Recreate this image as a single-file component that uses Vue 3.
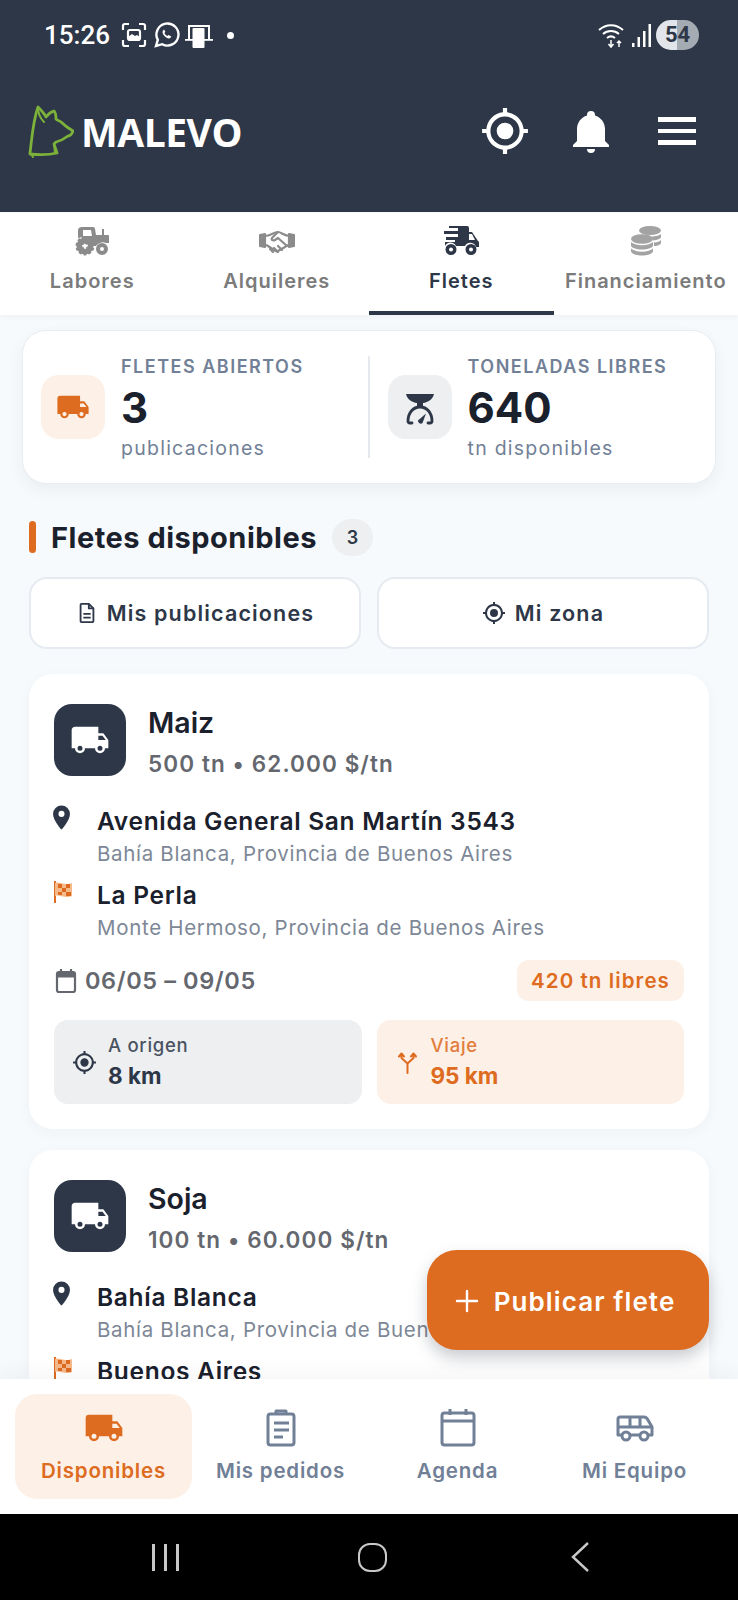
<script setup>
const tabs = [
  { key: 'labores', label: 'Labores' },
  { key: 'alquileres', label: 'Alquileres' },
  { key: 'fletes', label: 'Fletes', active: true },
  { key: 'fin', label: 'Financiamiento' }
]
const truck = 'M18,18.5A1.5,1.5 0 0,1 16.5,17A1.5,1.5 0 0,1 18,15.5A1.5,1.5 0 0,1 19.5,17A1.5,1.5 0 0,1 18,18.5M19.5,9.5L21.46,12H17V9.5M6,18.5A1.5,1.5 0 0,1 4.5,17A1.5,1.5 0 0,1 6,15.5A1.5,1.5 0 0,1 7.5,17A1.5,1.5 0 0,1 6,18.5M20,8H17V4H3C1.89,4 1,4.89 1,6V17H3A3,3 0 0,0 6,20A3,3 0 0,0 9,17H15A3,3 0 0,0 18,20A3,3 0 0,0 21,17H23V12L20,8Z'
const gps = 'M12,8A4,4 0 0,1 16,12A4,4 0 0,1 12,16A4,4 0 0,1 8,12A4,4 0 0,1 12,8M3.05,13H1V11H3.05C3.5,6.83 6.83,3.5 11,3.05V1H13V3.05C17.17,3.5 20.5,6.83 20.95,11H23V13H20.95C20.5,17.17 17.17,20.5 13,20.95V23H11V20.95C6.83,20.5 3.5,17.17 3.05,13M12,5A7,7 0 0,0 5,12A7,7 0 0,0 12,19A7,7 0 0,0 19,12A7,7 0 0,0 12,5Z'
const bell = 'M21,19V20H3V19L5,17V11C5,7.9 7.03,5.17 10,4.29C10,4.19 10,4.1 10,4A2,2 0 0,1 12,2A2,2 0 0,1 14,4C14,4.1 14,4.19 14,4.29C16.97,5.17 19,7.9 19,11V17L21,19M14,21A2,2 0 0,1 12,23A2,2 0 0,1 10,21'
const marker = 'M12,11.5A2.5,2.5 0 0,1 9.5,9A2.5,2.5 0 0,1 12,6.5A2.5,2.5 0 0,1 14.5,9A2.5,2.5 0 0,1 12,11.5M12,2A7,7 0 0,0 5,9C5,14.25 12,22 12,22C12,22 19,14.25 19,9A7,7 0 0,0 12,2Z'
const cards = [
  {
    title: 'Maiz', meta: '500 tn • 62.000 $/tn',
    from: 'Avenida General San Martín 3543', fromSub: 'Bahía Blanca, Provincia de Buenos Aires',
    to: 'La Perla', toSub: 'Monte Hermoso, Provincia de Buenos Aires',
    date: '06/05 – 09/05', free: '420 tn libres', origin: '8 km', trip: '95 km'
  },
  {
    title: 'Soja', meta: '100 tn • 60.000 $/tn',
    from: 'Bahía Blanca', fromSub: 'Bahía Blanca, Provincia de Buenos Aires',
    to: 'Buenos Aires'
  }
]
</script>

<template>
  <div class="page">
    <header class="top">
      <div class="status">
        <span class="time">15:26</span>
        <svg class="st-ico" width="28" height="28" viewBox="0 0 28 28" fill="none" stroke="#fff" stroke-width="2.2">
          <path d="M3 9V5a2 2 0 0 1 2-2h4M19 3h4a2 2 0 0 1 2 2v4M25 19v4a2 2 0 0 1-2 2h-4M9 25H5a2 2 0 0 1-2-2v-4" />
          <rect x="8" y="9" width="12" height="10" rx="2" />
          <path d="M8 19v-3l4-3 3 2 2-1 3 2v3z" fill="#fff" stroke="none" />
        </svg>
        <svg class="st-ico" width="28" height="28" viewBox="0 0 28 28" fill="none" stroke="#fff" stroke-width="2.4">
          <path d="M3 25l1.8-6.2A11 11 0 1 1 9.2 23.2z" />
          <path d="M10 9.5c-1 1.5-.5 3.5 1.5 5.6s4.2 3 5.8 2l1-1.6-2.8-1.6-1.2 1c-1-.4-2.4-1.8-2.9-3l1-1.1L11 8.500z" fill="#fff" stroke="none" />
        </svg>
        <svg class="st-ico" width="28" height="30" viewBox="0 0 28 30" fill="#fff">
          <path d="M3 19V5h22v14h-2V7H5v12z" />
          <rect x="0" y="19" width="28" height="1.800" />
          <rect x="7.500" y="8" width="12" height="20" rx="1" />
        </svg>
        <span class="st-dot"></span>
        <span class="st-gap"></span>
        <svg width="30" height="30" viewBox="0 0 30 30" fill="none" stroke="#fff" stroke-width="2">
          <path d="M1 10c7-6.500 17-6.500 24 0M5 14c4.500-4 11.500-4 16 0M9 18c2.500-2 5.500-2 8 0" />
          <path d="M13 20v7M10.500 24l2.500 3 2.500-3M21 27v-6M19 23l2-2 2 2" stroke-width="1.500" />
        </svg>
        <svg class="signal" width="20" height="26" viewBox="0 0 20 26" fill="#fff">
          <rect x="0" y="21" width="2.500" height="4" />
          <rect x="5.500" y="15" width="2.500" height="10" />
          <rect x="11" y="9" width="2.500" height="16" />
          <rect x="16.500" y="2" width="2.500" height="23" />
        </svg>
        <span class="battery">54</span>
      </div>
      <div class="brand-row">
        <div class="brand">
          <svg class="dog" width="46" height="54" viewBox="0 0 46 54" fill="none" stroke="#7cb13a" stroke-width="2.800" stroke-linecap="round" stroke-linejoin="round">
            <path d="M2 49C4 33 5 17 10 3c3 3 6 6 8 10 2-3 5-5 8-6 2 2 2 5 2 8 2 2 4 2 5 3 3 3 7 6 12 9-1 3-3 5-5 5-4 3-8 5-12 6l-2 2 3 9c-8 2-18 2-27 1" />
            <path d="M10 3c0 6 2 11 6 15M3 50l2 3M26 40l1 9" stroke-width="2" />
          </svg>
          <span class="logo-text">MALEVO</span>
        </div>
        <div class="top-actions">
          <svg width="50" height="50" viewBox="0 0 24 24" fill="#fff"><path :d="gps" /></svg>
          <svg width="48" height="48" viewBox="0 0 24 24" fill="#fff"><path :d="bell" /></svg>
          <div class="burger"><i></i><i></i><i></i></div>
        </div>
      </div>
    </header>

    <nav class="tabs">
      <div v-for="t in tabs" :key="t.key" class="tab" :class="{ on: t.active }">
        <svg v-if="t.key === 'labores'" width="36" height="30" viewBox="0 0 36 30" fill="#8b8b8b">
          <path d="M8 1h11a2 2 0 0 1 2 2l1 6h6V3h2v6h4a1 1 0 0 1 1 1v7h-3a8 8 0 0 0-10 3h-3a11 11 0 0 0-15-8V4c0-1.700 2-3 4-3zm1 3v6h9l-1-6z" fill-rule="evenodd" />
          <path d="M11 11.500a8.500 8.500 0 1 0 0 17 8.500 8.500 0 0 0 0-17zm0 5.500a3 3 0 1 1 0 6 3 3 0 0 1 0-6z" fill-rule="evenodd" stroke="#8b8b8b" stroke-width="2" stroke-dasharray="3 2" />
          <path d="M28 17a6 6 0 1 0 0 12 6 6 0 0 0 0-12zm0 4a2 2 0 1 1 0 4 2 2 0 0 1 0-4z" fill-rule="evenodd" />
        </svg>
        <svg v-else-if="t.key === 'alquileres'" width="36" height="30" viewBox="0 0 36 30" fill="none" stroke="#8b8b8b" stroke-width="2.200" stroke-linejoin="round" stroke-linecap="round">
          <path d="M1 9l5-1 0 13-5-1zM35 9l-5-1 0 13 5-1z" fill="#8b8b8b" />
          <path d="M6 10c3 0 5-1 7-2 2-1 4-2 6-2 3 0 5 3 11 4M30 19c-2 0-3 1-4 2l-7 4c-2 1-3 0-4-1l-6-4c-1-1-2-1-3-1" />
          <path d="M19 6l-6 6c-1 2 1 3 3 2l3-2 9 8M14 26l-3-3M19 26l-4-4M23 24l-4-4" />
        </svg>
        <svg v-else-if="t.key === 'fletes'" width="38" height="30" viewBox="0 0 38 30" fill="#2d3748">
          <path d="M7 0h18a2 2 0 0 1 2 2v4h3l6 9 1 1v5h-3a6 6 0 0 0-11-1H14a6 6 0 0 0-11 0V16h10v-2H4v-3h12V8H2V5h14V2H7z" />
          <path d="M27 8v6h6l-3-6z" fill="#fff" />
          <path d="M9 18a5.500 5.500 0 1 0 0 11 5.500 5.500 0 0 0 0-11zm0 3.500a2 2 0 1 1 0 4 2 2 0 0 1 0-4zM29 18a5.500 5.500 0 1 0 0 11 5.500 5.500 0 0 0 0-11zm0 3.500a2 2 0 1 1 0 4 2 2 0 0 1 0-4z" fill-rule="evenodd" />
        </svg>
        <svg v-else width="32" height="30" viewBox="0 0 32 30" fill="#a3a3a3">
          <ellipse cx="20" cy="4.500" rx="11" ry="4.500" />
          <path d="M22 10.500c4 0 7.500-1 9-2.500v3c0 1.500-3 3-8 3.400zM24 16.500c3 0 6-1 7-2.500v3c0 1.500-3 3-7 3z" />
          <ellipse cx="12" cy="13" rx="11" ry="4.800" />
          <path d="M1 16c2 2 6 3.200 11 3.200S21 18 23 16v3.500c0 2-5 4-11 4s-11-2-11-4zM1 22.500c2 2 6 3.200 11 3.200s9-1.200 11-3.200V25c0 2.500-5 4.500-11 4.500S1 27.500 1 25z" />
        </svg>
        <span>{{ t.label }}</span>
      </div>
    </nav>

    <main class="main">
      <section class="stats">
        <div class="stat first">
          <div class="stat-box orange">
            <svg width="34" height="34" viewBox="0 0 24 24" fill="#dd6b20"><path d="M1 6a2 2 0 0 1 2-2h14v4h3l3 4v5h-2a3 3 0 0 1-6 0H9a3 3 0 0 1-6 0H1zm16 3.500V12h4.460L19.500 9.500zM6 15.500a1.500 1.500 0 1 0 0 3 1.500 1.500 0 0 0 0-3zm12 0a1.500 1.500 0 1 0 0 3 1.500 1.500 0 0 0 0-3z" fill-rule="evenodd" /></svg>
          </div>
          <div class="stat-text">
            <div class="stat-label">FLETES ABIERTOS</div>
            <div class="stat-num">3</div>
            <div class="stat-sub">publicaciones</div>
          </div>
        </div>
        <div class="stat-div"></div>
        <div class="stat second">
          <div class="stat-box grey">
            <svg width="50" height="50" viewBox="0 0 50 50" fill="none" stroke="#2d3748" stroke-width="2.800" stroke-linecap="round" stroke-linejoin="round">
              <path d="M11 12h28c-1 5-6 8.500-11 9v4h-6v-4c-5-.5-10-4-11-9z" fill="#2d3748" stroke="none" />
              <path d="M17 41h-2a2 2 0 0 1-2-2c0-8 5-14 12-14s12 6 12 14a2 2 0 0 1-2 2h-2" />
              <path d="M23 38.500a2.800 2.800 0 0 0 4.500 2.500l3.500-9.500z" fill="#2d3748" stroke="none" />
            </svg>
          </div>
          <div class="stat-text">
            <div class="stat-label">TONELADAS LIBRES</div>
            <div class="stat-num">640</div>
            <div class="stat-sub">tn disponibles</div>
          </div>
        </div>
      </section>

      <div class="section-head">
        <span class="accent"></span>
        <h2>Fletes disponibles</h2>
        <span class="count">3</span>
      </div>

      <div class="btn-row">
        <button class="btn">
          <svg width="22" height="22" viewBox="0 0 24 24" fill="none" stroke="#2d3748" stroke-width="2" stroke-linejoin="round">
            <path d="M6 2h8l5 5v14a1 1 0 0 1-1 1H6a1 1 0 0 1-1-1V3a1 1 0 0 1 1-1z" />
            <path d="M14 2v5h5M8 13h8M8 17h8" />
          </svg>
          Mis publicaciones
        </button>
        <button class="btn">
          <svg width="24" height="24" viewBox="0 0 24 24" fill="#2d3748"><path :d="gps" /></svg>
          Mi zona
        </button>
      </div>

      <article v-for="c in cards" :key="c.title" class="card">
        <div class="card-head">
          <div class="card-ico">
            <svg width="40" height="40" viewBox="0 0 24 24" fill="#fff"><path :d="truck" /></svg>
          </div>
          <div>
            <div class="card-title">{{ c.title }}</div>
            <div class="card-meta">{{ c.meta }}</div>
          </div>
        </div>
        <div class="route">
          <svg class="route-ico pin" width="29" height="29" viewBox="0 0 24 24" fill="#2d3748"><path :d="marker" /></svg>
          <div>
            <div class="place">{{ c.from }}</div>
            <div class="place-sub">{{ c.fromSub }}</div>
          </div>
        </div>
        <div class="route">
          <svg class="route-ico flag" width="24" height="24" viewBox="0 0 24 24">
            <path d="M3 1v22" stroke="#dd6b20" stroke-width="2" fill="none" />
            <path d="M3 3c5-2 8 3 17 0v13c-8 3-12-2-17 0z" fill="#f5b98a" />
            <path d="M6 4h4v4H6zM14 4h4v4h-4zM10 8h4v4h-4zM6 12h4v3H6zM14 12h5v4h-5z" fill="#dd6b20" />
          </svg>
          <div>
            <div class="place">{{ c.to }}</div>
            <div v-if="c.toSub" class="place-sub">{{ c.toSub }}</div>
          </div>
        </div>
        <template v-if="c.date">
          <div class="date-row">
            <div class="date">
              <svg width="24" height="26" viewBox="0 0 24 26" fill="none" stroke="#64676e" stroke-width="2.200">
                <rect x="3" y="4" width="18" height="20" rx="2" />
                <path d="M3 7h18" stroke-width="5" />
                <path d="M7 1v4M17 1v4" />
              </svg>
              {{ c.date }}
            </div>
            <span class="free">{{ c.free }}</span>
          </div>
          <div class="tiles">
            <div class="tile grey">
              <svg width="25" height="25" viewBox="0 0 24 24" fill="#2d3748"><path :d="gps" /></svg>
              <div>
                <div class="tile-label">A origen</div>
                <div class="tile-val">{{ c.origin }}</div>
              </div>
            </div>
            <div class="tile peach">
              <svg width="25" height="25" viewBox="0 0 25 25" fill="none" stroke="#dd6b20" stroke-width="2" stroke-linecap="round" stroke-linejoin="round">
                <path d="M12.500 23V13.500L6.500 8V4M12.500 13.500L18.500 8V4M4 6.500l2.500-3 2.500 3M16 6.500l2.500-3 2.500 3" />
              </svg>
              <div>
                <div class="tile-label">Viaje</div>
                <div class="tile-val">{{ c.trip }}</div>
              </div>
            </div>
          </div>
        </template>
      </article>
    </main>

    <button class="fab">
      <svg width="24" height="24" viewBox="0 0 24 24" stroke="#fff" stroke-width="2.400" stroke-linecap="round"><path d="M12 2v20M2 12h20" /></svg>
      Publicar flete
    </button>

    <nav class="bottom">
      <div class="nav-item on">
        <svg width="40" height="40" viewBox="0 0 24 24" fill="#dd6b20"><path d="M1 6a2 2 0 0 1 2-2h14v4h3l3 4v5h-2a3 3 0 0 1-6 0H9a3 3 0 0 1-6 0H1zm16 3.500V12h4.460L19.500 9.500zM6 15.500a1.500 1.500 0 1 0 0 3 1.500 1.500 0 0 0 0-3zm12 0a1.500 1.500 0 1 0 0 3 1.500 1.500 0 0 0 0-3z" fill-rule="evenodd" /></svg>
        <span>Disponibles</span>
      </div>
      <div class="nav-item">
        <svg width="40" height="40" viewBox="0 0 40 40" fill="none" stroke="#718096" stroke-width="3" stroke-linejoin="round">
          <rect x="7" y="6" width="26" height="31" rx="2.500" />
          <path d="M15 6V3h10v3" />
          <path d="M13 15h15M13 22h15M13 29h9" />
        </svg>
        <span>Mis pedidos</span>
      </div>
      <div class="nav-item">
        <svg width="40" height="40" viewBox="0 0 40 40" fill="none" stroke="#718096" stroke-width="3" stroke-linejoin="round">
          <rect x="4" y="5" width="32" height="32" rx="2.500" />
          <path d="M4 13h32M12 1v6M28 1v6" />
        </svg>
        <span>Agenda</span>
      </div>
      <div class="nav-item">
        <svg width="40" height="40" viewBox="0 0 40 40" fill="none" stroke="#718096" stroke-width="3" stroke-linejoin="round">
          <path d="M3 27V11a2 2 0 0 1 2-2h24c2 0 3 1 4 3l4 7v8z" />
          <path d="M3 19h34M15 9v10M25 9v10" />
          <circle cx="11" cy="28" r="4" fill="#fff" />
          <circle cx="29" cy="28" r="4" fill="#fff" />
        </svg>
        <span>Mi Equipo</span>
      </div>
    </nav>

    <footer class="sysbar">
      <div class="recents"><i></i><i></i><i></i></div>
      <div class="home"></div>
      <svg width="20" height="30" viewBox="0 0 20 30" fill="none" stroke="#c8c8c8" stroke-width="2.400"><path d="M18 1L3 15l15 14" /></svg>
    </footer>
  </div>
</template>

<style>
html, body { margin: 0; background: #f7fafc; }
</style>

<style scoped>
.page {
  position: relative;
  width: 738px;
  height: 1600px;
  display: flex;
  flex-direction: column;
  overflow: hidden;
  background: #f7fafc;
  font-family: Inter, "Noto Sans", sans-serif;
  color: #1a202c;
}
.top { height: 212px; flex: none; background: #2d3748; color: #fff; box-sizing: border-box; padding: 20px 28px 0 28px; }
.status { display: flex; align-items: center; height: 30px; padding-left: 16px; padding-right: 11px; gap: 4.500px; }
.time { font: 500 26px Roboto, sans-serif; margin-right: 6px; }
.st-dot { width: 7px; height: 7px; border-radius: 50%; background: #fff; margin-left: 9px; }
.st-gap { flex: 1; }
.signal { margin-left: -1px; }
.battery {
  width: 43px; height: 30px; border-radius: 15px;
  background: linear-gradient(90deg, #e2e6ea 0 50%, #a5abb3 50% 100%);
  color: #2d3748; font: 700 22px/30px Roboto, sans-serif; text-align: center;
}
.brand-row { display: flex; justify-content: space-between; align-items: center; margin-top: 48px; height: 66px; }
.brand { display: flex; align-items: center; gap: 7px; }
.logo-text { font: 700 39px "Open Sans", sans-serif; letter-spacing: -.5px; color: #fff; }
.top-actions { display: flex; align-items: center; gap: 37px; padding-right: 14px; }
.burger { width: 38px; display: flex; flex-direction: column; gap: 7px; margin-left: 6px; }
.burger i { display: block; height: 4.500px; background: #fff; }

.tabs { height: 102px; flex: none; display: grid; grid-template-columns: repeat(4, 1fr); background: #fff; margin-top: 1px; box-shadow: 0 2px 6px rgba(0, 0, 0, .04); position: relative; z-index: 1; }
.tab { display: flex; flex-direction: column; align-items: center; justify-content: flex-start; padding-top: 13px; gap: 13px; font-size: 20px; font-weight: 600; color: #7b7b7b; box-sizing: border-box; white-space: nowrap; letter-spacing: 1px; }
.tab svg { height: 30px; flex: none; }
.tab.on { color: #2d3748; border-bottom: 4px solid #2d3748; }

.main { flex: 1; min-height: 0; overflow: hidden; padding: 15px 29px 0 29px; }
.stats {
  margin: 0 -7px; height: 154px; background: #fff; border: 1px solid #e8edf2; border-radius: 24px;
  box-shadow: 0 6px 16px rgba(45, 55, 72, .06); display: flex; align-items: center; box-sizing: border-box; padding: 0 17px 0 18px;
}
.stat { display: flex; align-items: center; gap: 16px; }
.stat.first { flex: 0 0 327px; }
.stat.second { flex: 1; padding-left: 18px; }
.stat-div { width: 1.500px; height: 102px; background: #e5e9ee; flex: none; }
.stat-box { width: 64px; height: 64px; border-radius: 18px; display: flex; align-items: center; justify-content: center; flex: none; }
.stat-box.orange { background: #fdf0e7; }
.stat-box.grey { background: #edeff1; }
.stat-label { font-size: 18px; font-weight: 600; letter-spacing: 1.500px; color: #718096; line-height: 30px; white-space: nowrap; }
.stat-num { font-size: 42px; font-weight: 700; line-height: 52px; color: #1a202c; }
.stat-sub { font-size: 19.500px; color: #718096; line-height: 28px; letter-spacing: 1.250px; }

.section-head { display: flex; align-items: center; margin-top: 34px; height: 38px; }
.accent { width: 7px; height: 32px; border-radius: 4px; background: #dd6b20; margin-right: 15px; }
h2 { margin: 0; font-size: 29px; font-weight: 700; letter-spacing: .5px; color: #1a202c; }
.count { width: 41px; height: 37px; border-radius: 19px; background: #edeff1; margin-left: 15px; text-align: center; font-size: 18px; font-weight: 600; line-height: 37px; color: #2d3748; }

.btn-row { display: grid; grid-template-columns: 1fr 1fr; gap: 16px; margin-top: 21px; }
.btn {
  height: 72px; background: #fff; border: 2px solid #e6ebf1; border-radius: 18px; display: flex; align-items: center; justify-content: center; gap: 9px;
  font-family: inherit; font-size: 21.500px; font-weight: 600; letter-spacing: 1.150px; color: #2d3748; padding: 0;
}

.card { background: #fff; border-radius: 24px; box-shadow: 0 4px 14px rgba(45, 55, 72, .04); padding: 30px 25px 25px; margin-top: 25px; }
.card + .card { margin-top: 21px; }
.card-head { display: flex; gap: 22px; height: 72px; margin-bottom: 27px; }
.card-ico { width: 72px; height: 72px; border-radius: 18px; background: #2d3748; display: flex; align-items: center; justify-content: center; flex: none; }
.card-title { font-size: 28.500px; font-weight: 600; line-height: 36px; margin-top: 1px; color: #1a202c; }
.card-meta { font-size: 22.500px; font-weight: 600; line-height: 34px; margin-top: 6px; letter-spacing: 1.100px; color: #64676e; }
.route { display: flex; gap: 21px; margin-bottom: 8px; }
.route-ico { flex: none; }
.route-ico.pin { margin-left: -7px; }
.route-ico.flag { margin: 3px 0 0 -2px; }
.place { font-size: 24.500px; font-weight: 600; line-height: 32px; letter-spacing: .7px; color: #1a202c; padding-top: 2px; }
.place-sub { font-size: 20.500px; line-height: 30px; margin-top: 2px; letter-spacing: .68px; color: #7d8796; }
.date-row { display: flex; justify-content: space-between; align-items: center; margin-top: 17px; }
.date { display: flex; align-items: center; gap: 7px; font-size: 23.500px; font-weight: 600; letter-spacing: .6px; color: #64676e; }
.free { width: 167px; height: 41px; border-radius: 12px; background: #fdf0e7; color: #dd6b20; font-size: 20.500px; font-weight: 600; line-height: 41px; text-align: center; letter-spacing: 1.100px; }
.tiles { display: grid; grid-template-columns: 1fr 1fr; gap: 15px; margin-top: 19px; }
.tile { height: 84px; border-radius: 14px; display: flex; align-items: center; gap: 11px; padding-left: 18px; }
.tile.grey { background: #edeff1; color: #2d3748; }
.tile.peach { background: #fdf0e7; color: #dd6b20; }
.tile-label { font-size: 18.500px; font-weight: 500; line-height: 28px; letter-spacing: .7px; opacity: .85; }
.tile-val { font-size: 22.500px; font-weight: 700; line-height: 34px; }

.fab {
  position: absolute; left: 427px; top: 1250px; width: 282px; height: 100px; border: 0; border-radius: 30px; background: #dd6b20; color: #fff;
  display: flex; align-items: center; justify-content: center; gap: 15px; font-family: inherit; font-size: 26px; font-weight: 600; letter-spacing: 1.100px; box-shadow: 0 8px 16px rgba(45, 55, 72, .25); z-index: 2; padding: 2px 6px 0 0;
}

.bottom { height: 135px; flex: none; background: #fff; display: grid; grid-template-columns: repeat(4, 177px); padding: 15px; box-sizing: border-box; position: relative; z-index: 1; box-shadow: 0 -8px 16px rgba(45, 55, 72, .04); }
.nav-item { display: flex; flex-direction: column; align-items: center; padding-top: 14px; gap: 10px; border-radius: 22px; font-size: 20.500px; font-weight: 600; letter-spacing: .8px; color: #718096; }
.nav-item.on { background: #fdf0e7; color: #dd6b20; }

.sysbar { height: 86px; flex: none; background: #000; display: flex; align-items: center; position: relative; padding-left: 152px; }
.recents { display: flex; gap: 9.500px; width: 206px; }
.recents i { display: block; width: 2.500px; height: 27px; background: #c8c8c8; }
.home { width: 25px; height: 25px; border: 2.400px solid #c8c8c8; border-radius: 12px; margin-right: 183px; }
</style>
